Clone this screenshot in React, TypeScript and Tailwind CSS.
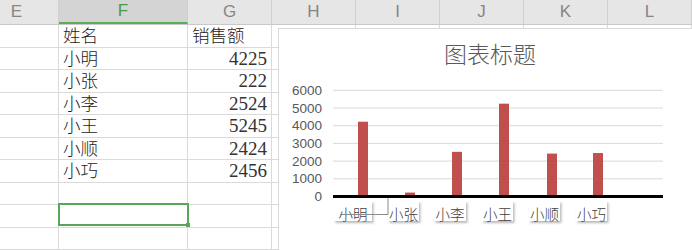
import React from 'react'

const cols = [
  { name: 'E', w: 'w-[84px]' },
  { name: 'F', w: 'w-[129px]' },
  { name: 'G', w: 'w-[84px]' },
  { name: 'H', w: 'w-[84px]' },
  { name: 'I', w: 'w-[84px]' },
  { name: 'J', w: 'w-[84px]' },
  { name: 'K', w: 'w-[84px]' },
  { name: 'L', w: 'w-[84px]' },
]

const sales = [
  { name: '小明', value: 4225 },
  { name: '小张', value: 222 },
  { name: '小李', value: 2524 },
  { name: '小王', value: 5245 },
  { name: '小顺', value: 2424 },
  { name: '小巧', value: 2456 },
]

const rows: { f: string; g: string; numeric?: boolean }[] = [
  { f: '姓名', g: '销售额' },
  ...sales.map((s) => ({ f: s.name, g: String(s.value), numeric: true })),
  { f: '', g: '' },
  { f: '', g: '' },
  { f: '', g: '' },
]

// chart geometry, page coordinates
const zeroY = 196.5
const step = 17.7
const barX = [358, 405, 452, 499, 547, 593]
const labelBox = [
  [334, 372],
  [388, 419],
  [434, 466],
  [482, 513],
  [529, 560],
  [576, 607],
]

function Chart() {
  return (
    <div className="absolute left-[278px] top-[28px] w-[420px] h-[230px] bg-white border border-[#d9d9d9]">
      <svg width="420" height="230" viewBox="279 29 420 230" className="block">
        <defs>
          <filter id="sh" x="-20%" y="-20%" width="150%" height="160%">
            <feGaussianBlur stdDeviation="1.3" />
          </filter>
        </defs>
        <text
          x="490"
          y="63"
          textAnchor="middle"
          fontSize="23"
          fill="#595959"
          fontFamily="'Noto Sans CJK SC', sans-serif"
          fontWeight="300"
        >
          图表标题
        </text>
        {[0, 1, 2, 3, 4, 5, 6].map((i) => {
          const y = zeroY - i * step
          return (
            <g key={i}>
              {i > 0 && <line x1="333" x2="663" y1={y} y2={y} stroke="#d9d9d9" strokeWidth="1" />}
              <text
                x="322"
                y={y + 4.5}
                textAnchor="end"
                fontSize="13.5"
                fill="#595959"
                fontFamily="'Liberation Sans', sans-serif"
              >
                {i * 1000}
              </text>
            </g>
          )
        })}
        {sales.map((s, i) => {
          const h = (s.value / 1000) * step
          return <rect key={s.name} x={barX[i]} y={zeroY - h} width="10" height={h} fill="#c0504d" />
        })}
        <line x1="333" x2="663" y1={zeroY + 2.5} y2={zeroY + 2.5} stroke="#aaa" strokeWidth="2" filter="url(#sh)" />
        <line x1="333" x2="663" y1={zeroY} y2={zeroY} stroke="#000" strokeWidth="3" />
        {sales.map((s, i) => {
          const [a, b] = labelBox[i]
          return (
            <g key={s.name}>
              <rect x={a + 1.5} y="203" width={b - a} height="20" fill="#a8a8a8" opacity="0.8" filter="url(#sh)" />
              <rect x={a} y="200" width={b - a} height="21" fill="#fff" />
              <text
                x={(a + b) / 2}
                y="220"
                textAnchor="middle"
                fontSize="14.5"
                fill="#404040"
                fontFamily="'Noto Sans CJK SC', sans-serif"
                fontWeight="300"
              >
                {s.name}
              </text>
            </g>
          )
        })}
        <line x1="340" x2="388" y1="214.5" y2="214.5" stroke="#8c8c8c" strokeWidth="1" />
        <line x1="388" x2="388" y1="198" y2="214.5" stroke="#8c8c8c" strokeWidth="1" />
      </svg>
    </div>
  )
}

export default function App() {
  return (
    <div className="relative w-[692px] h-[250px] overflow-hidden bg-white">
      <div className="flex -ml-[25px] h-[25px] bg-[#e6e6e6] border-b border-[#c8c8c8]">
        {cols.map((c) => (
          <div
            key={c.name}
            className={`${c.w} shrink-0 flex items-center justify-center border-r border-[#d0d0d0] text-[17px] font-['Liberation_Sans',sans-serif] ${
              c.name === 'F'
                ? 'bg-[#d4d4d4] text-[#4a9a4a] border-b-2 border-b-[#5aad5a]'
                : 'text-[#858585]'
            }`}
          >
            {c.name}
          </div>
        ))}
      </div>
      {rows.map((r, ri) => (
        <div key={ri} className="flex -ml-[25px] h-[22.5px]">
          {cols.map((c) => (
            <div
              key={c.name}
              className={`${c.w} shrink-0 border-r border-b border-[#dadada] leading-[22px] px-[4px] whitespace-nowrap font-['Liberation_Serif','Noto_Sans_CJK_SC',serif] ${
                r.numeric && c.name === 'G'
                  ? 'text-right text-[19px] text-[#333333]'
                  : 'text-[17.5px] font-light text-[#1a1a1a]'
              }`}
            >
              {c.name === 'F' ? r.f : c.name === 'G' ? r.g : ''}
            </div>
          ))}
        </div>
      ))}
      {/* active cell F9 */}
      <div className="absolute left-[58px] top-[202.5px] w-[131px] h-[23.5px] border-2 border-[#5aa55a]">
        <div className="absolute -right-[3px] -bottom-[3px] w-[4px] h-[4px] bg-[#5aa55a]" />
      </div>
      <Chart />
    </div>
  )
}
